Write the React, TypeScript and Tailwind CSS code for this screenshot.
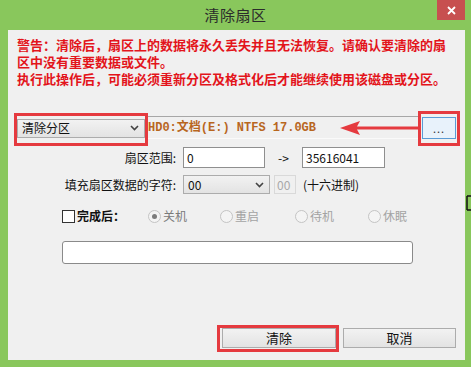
import React from "react";

const cjk = { fontFamily: '"Noto Sans CJK SC", "Noto Sans", sans-serif' };
const mono = { fontFamily: '"Liberation Mono", "Noto Sans CJK SC", monospace' };

function Chevron() {
  return (
    <svg width="9" height="6" viewBox="0 0 9 6" className="shrink-0">
      <path d="M1 1 L4.5 4.5 L8 1" fill="none" stroke="#444" strokeWidth="1.6" />
    </svg>
  );
}

function Combo({ text, width }: { text: string; width: string }) {
  return (
    <div
      className={`${width} h-[19px] flex items-center justify-between pl-[4px] pr-[5px] border border-[#acacac] bg-gradient-to-b from-[#f2f2f2] to-[#e3e3e3] text-[12px] text-[#111]`}
    >
      <span>{text}</span>
      <Chevron />
    </div>
  );
}

function Radio({ label, checked, width }: { label: string; checked?: boolean; width: string }) {
  return (
    <div className={`${width} flex items-center gap-[2px]`}>
      <div className="w-[13px] h-[13px] rounded-full border border-[#c4c4c4] bg-[#f4f4f4] flex items-center justify-center">
        {checked && <div className="w-[5px] h-[5px] rounded-full bg-[#7c7c7c]" />}
      </div>
      <span className={`text-[12px] ${checked ? "text-[#7a7a7a]" : "text-[#a3a3a3]"}`}>{label}</span>
    </div>
  );
}

export default function App() {
  return (
    <div className="w-[471px] h-[367px] bg-[#89c75c] flex flex-col overflow-hidden" style={cjk}>
      {/* title bar */}
      <div className="relative h-[30px] shrink-0 flex items-center justify-center">
        <span className="text-[15px] text-[#2b2b2b] tracking-[0.5px]">清除扇区</span>
        <div className="absolute top-0 left-[437px] w-[28px] h-[20px] bg-[#c75050] flex items-center justify-center">
          <svg width="9" height="9" viewBox="0 0 9 9">
            <path d="M1 1 L8 8 M8 1 L1 8" stroke="#fff" strokeWidth="1.8" />
          </svg>
        </div>
      </div>

      {/* client area */}
      <div className="relative flex-1 ml-[8px] mr-[6px] mb-[7px] bg-[#f0f0f0] flex flex-col">
        <div className="pl-[9px] pt-[6px] text-[13px] leading-[17px] font-bold text-[#e3141b]">
          <div>警告：清除后，扇区上的数据将永久丢失并且无法恢复。请确认要清除的扇</div>
          <div>区中没有重要数据或文件。</div>
          <div>执行此操作后，可能必须重新分区及格式化后才能继续使用该磁盘或分区。</div>
        </div>

        {/* row 1 */}
        <div className="mt-[29px] h-[24px] flex items-center pl-[9px]">
          <Combo text="清除分区" width="w-[128px]" />
          <div className="w-[275px] h-[23px] self-start border-t border-[#a7a7a7] border-b border-b-[#fafafa] flex items-center pl-[3px] overflow-hidden">
            <span className="text-[12px] font-bold text-[#b8661e] whitespace-nowrap" style={mono}>
              HD0:文档(E:) NTFS 17.0GB
            </span>
          </div>
          <div className="ml-[2px] w-[34px] h-[22px] border border-[#5a9bd5] bg-[#e8f2fb] flex items-center justify-center text-[11px] text-[#333] tracking-[1px]">
            ...
          </div>
        </div>

        {/* row 2 */}
        <div className="mt-[7px] h-[21px] flex items-center pl-[54px] text-[12px] text-[#111]">
          <div className="w-[114px] text-right">扇区范围:</div>
          <div className="ml-[7px] w-[82px] h-[21px] bg-white border border-[#8f8f8f] flex items-center pl-[3px]">0</div>
          <div className="w-[37px] text-center">-&gt;</div>
          <div className="w-[83px] h-[21px] bg-white border border-[#8f8f8f] flex items-center pl-[3px]">35616041</div>
        </div>

        {/* row 3 */}
        <div className="mt-[7px] h-[19px] flex items-center pl-[54px] text-[12px] text-[#111]">
          <div className="w-[114px] text-right">填充扇区数据的字符:</div>
          <div className="ml-[7px]">
            <Combo text="00" width="w-[87px]" />
          </div>
          <div className="ml-[4px] w-[22px] h-[19px] border border-[#d9d9d9] bg-[#f0f0f0] flex items-center pl-[2px] text-[#a8a8a8]">
            00
          </div>
          <div className="ml-[7px]">(十六进制)</div>
        </div>

        {/* row 4 */}
        <div className="mt-[12px] h-[20px] flex items-center pl-[54px]">
          <div className="w-[13px] h-[13px] bg-white border border-[#333]" />
          <span className="ml-[2px] w-[71px] text-[12px] font-bold text-[#111]">完成后：</span>
          <Radio label="关机" checked width="w-[72px]" />
          <Radio label="重启" width="w-[75px]" />
          <Radio label="待机" width="w-[73px]" />
          <Radio label="休眠" width="w-[50px]" />
        </div>

        {/* row 5 */}
        <div className="mt-[15px] ml-[54px] w-[351px] h-[23px] bg-white border border-[#8a8a8a] rounded-[3px]" />

        {/* buttons */}
        <div className="mt-auto mb-[12px] mr-[9px] flex justify-end gap-[7px] text-[13px] text-[#111]">
          <div className="w-[114px] h-[20px] border border-[#acacac] bg-gradient-to-b from-[#f2f2f2] to-[#e3e3e3] flex items-center justify-center">
            清除
          </div>
          <div className="w-[113px] h-[20px] border border-[#acacac] bg-gradient-to-b from-[#f2f2f2] to-[#e3e3e3] flex items-center justify-center">
            取消
          </div>
        </div>

        {/* annotations */}
        <div className="absolute left-[6px] top-[83px] w-[134px] h-[33px] border-[3px] border-[#e53a3f]" />
        <div className="absolute left-[410px] top-[81px] w-[42px] h-[35px] border-[3px] border-[#e53a3f]" />
        <div className="absolute left-[209px] top-[295px] w-[122px] h-[27px] border-[3px] border-[#e53a3f]" />
        <svg className="absolute left-[332px] top-[90px]" width="78" height="16" viewBox="0 0 78 16">
          <path d="M0 8 L20 1 L17 6.5 L78 6.5 L78 9.5 L17 9.5 L20 15 Z" fill="#e53a3f" />
        </svg>
      </div>

      {/* resize cursor artifact */}
      <svg className="absolute left-[465px] top-[195px]" width="6" height="16" viewBox="0 0 6 16">
        <path d="M2 1 L2 15 M2 1 L6 1 M2 15 L6 15" stroke="#111" strokeWidth="1.5" fill="none" />
      </svg>
    </div>
  );
}
